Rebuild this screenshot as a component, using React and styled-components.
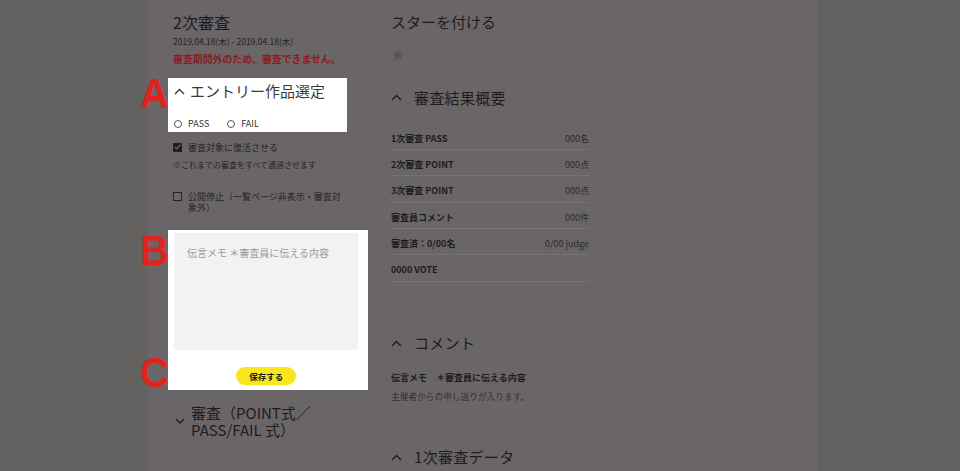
import styled, { createGlobalStyle } from 'styled-components';

const GlobalStyle = createGlobalStyle`
  html, body {
    margin: 0;
    padding: 0;
    height: 471px;
    overflow: hidden;
    background: #646260;
  }
  body {
    font-family: "Noto Sans CJK JP", "Noto Sans", sans-serif;
    color: #1e1c1c;
  }
`;

const ChevronUp = () => (
  <svg width="11" height="7" viewBox="0 0 11 7">
    <polyline points="1,6 5.5,1.5 10,6" fill="none" stroke="#1e1c1c" strokeWidth="1.3" />
  </svg>
);

const ChevronDown = () => (
  <svg width="10" height="6" viewBox="0 0 10 6">
    <polyline points="1,1 5,5 9,1" fill="none" stroke="#1e1c1c" strokeWidth="1.3" />
  </svg>
);

const summary = [
  { label: '1次審査 PASS', value: '000名' },
  { label: '2次審査 POINT', value: '000点' },
  { label: '3次審査 POINT', value: '000点' },
  { label: '審査員コメント', value: '000件' },
  { label: '審査済：0/00名', value: '0/00 judge' },
  { label: '0000 VOTE', value: '' },
];

const App = () => {
  return (
    <>
      <GlobalStyle />
      <Page>
        <LeftCol>
          <Title>2次審査</Title>
          <DateText>2019.04.18(木) - 2019.04.18(木)</DateText>
          <Warning>審査期間外のため、審査できません。</Warning>

          <Highlight $top={12.3} $width={179}>
            <Marker $top={-6.5}>A</Marker>
            <BoxHeading>
              <ChevronUp />
              エントリー作品選定
            </BoxHeading>
            <RadioRow>
              <RadioLabel>
                <RadioDot />
                PASS
              </RadioLabel>
              <RadioLabel>
                <RadioDot />
                FAIL
              </RadioLabel>
            </RadioRow>
          </Highlight>

          <CheckRow $top={10}>
            <CheckBox $checked>
              <svg width="7" height="6" viewBox="0 0 7 6">
                <polyline points="0.8,3 2.7,4.8 6.2,0.8" fill="none" stroke="#6a6667" strokeWidth="1.4" />
              </svg>
            </CheckBox>
            <CheckText>審査対象に復活させる</CheckText>
          </CheckRow>
          <Note>※これまでの審査をすべて通過させます</Note>
          <CheckRow $top={21}>
            <CheckBox />
            <CheckText>公開停止（一覧ページ非表示・審査対象外）</CheckText>
          </CheckRow>

          <Highlight $top={17.2} $width={200} $padded>
            <Marker $top={-1}>B</Marker>
            <Marker $top={121}>C</Marker>
            <MemoArea>伝言メモ ＊審査員に伝える内容</MemoArea>
            <SaveButton>保存する</SaveButton>
          </Highlight>

          <FoldHeading>
            <ChevronDown />
            <span>審査（POINT式／PASS/FAIL 式）</span>
          </FoldHeading>
        </LeftCol>

        <RightCol>
          <PlainHeading $top={11.7}>スターを付ける</PlainHeading>
          <Star>
            <svg width="14" height="14" viewBox="0 0 24 24">
              <polygon
                points="12,1.5 14.9,8.6 22.5,9.2 16.7,14.1 18.5,21.6 12,17.6 5.5,21.6 7.3,14.1 1.5,9.2 9.1,8.6"
                fill="#595657"
              />
            </svg>
          </Star>

          <SectionHeading $top={25.7}>
            <ChevronUp />
            審査結果概要
          </SectionHeading>
          <SummaryList>
            {summary.map((row) => (
              <SummaryRow key={row.label}>
                <RowLabel>{row.label}</RowLabel>
                <RowValue>{row.value}</RowValue>
              </SummaryRow>
            ))}
          </SummaryList>

          <SectionHeading $top={51.5}>
            <ChevronUp />
            コメント
          </SectionHeading>
          <MemoLabel>伝言メモ　＊審査員に伝える内容</MemoLabel>
          <MemoText>主催者からの申し送りが入ります。</MemoText>

          <SectionHeading $top={44.7}>
            <ChevronUp />
            1次審査データ
          </SectionHeading>
        </RightCol>
      </Page>
    </>
  );
};

export default App;

const Page = styled.div`
  margin-left: 148px;
  width: 670px;
  min-height: 471px;
  background: #6a6667;
  padding-left: 25px;
  box-sizing: border-box;
  display: flex;
  align-items: flex-start;
  gap: 23px;
`;

const LeftCol = styled.div`
  width: 195px;
  display: flex;
  flex-direction: column;
  align-items: flex-start;
`;

const Title = styled.h1`
  margin: 12px 0 0;
  font-size: 16px;
  font-weight: 400;
  line-height: 20px;
  color: #1e1c1c;
`;

const DateText = styled.div`
  margin-top: 4px;
  font-size: 8.5px;
  line-height: 11px;
  color: #242121;
`;

const Warning = styled.div`
  margin-top: 5.5px;
  font-size: 9.9px;
  font-weight: 700;
  line-height: 13.5px;
  color: #8a1b21;
`;

const Highlight = styled.div`
  position: relative;
  margin-top: ${(p) => p.$top}px;
  margin-left: -5px;
  width: ${(p) => p.$width}px;
  background: #ffffff;
  box-sizing: border-box;
  padding: ${(p) => (p.$padded ? '2.3px 9.7px 5.4px 6px' : '4px 6px 2px')};
  display: flex;
  flex-direction: column;
  align-items: ${(p) => (p.$padded ? 'center' : 'flex-start')};
`;

const Marker = styled.span`
  position: absolute;
  left: -28px;
  top: ${(p) => p.$top}px;
  font-family: "Liberation Sans", Arial, sans-serif;
  font-weight: 700;
  font-size: 40px;
  line-height: 1;
  color: #e0231d;
  transform: scaleY(1.05);
  transform-origin: top left;
`;

const BoxHeading = styled.div`
  display: flex;
  align-items: center;
  gap: 5px;
  font-size: 15px;
  line-height: 18px;
  color: #3a3a3a;

  svg polyline {
    stroke: #333;
  }
`;

const RadioRow = styled.div`
  margin-top: 17.5px;
  display: flex;
  gap: 18px;
`;

const RadioLabel = styled.label`
  display: flex;
  align-items: center;
  gap: 6px;
  font-size: 9px;
  line-height: 12px;
  color: #333;
`;

const RadioDot = styled.span`
  width: 8px;
  height: 8px;
  border: 1px solid #555;
  border-radius: 50%;
  box-sizing: border-box;
`;

const CheckRow = styled.div`
  margin-top: ${(p) => p.$top}px;
  display: flex;
  align-items: flex-start;
  gap: 6px;
`;

const CheckBox = styled.span`
  flex: none;
  width: 9px;
  height: 9px;
  margin-top: 1px;
  box-sizing: border-box;
  border: 1px solid #262323;
  background: ${(p) => (p.$checked ? '#1e1c1c' : 'transparent')};
  display: flex;
  align-items: center;
  justify-content: center;
`;

const CheckText = styled.span`
  max-width: 156px;
  font-size: 9px;
  line-height: 11px;
  color: #272424;
`;

const Note = styled.div`
  margin-top: 6.5px;
  font-size: 8px;
  line-height: 11px;
  color: #272424;
`;

const MemoArea = styled.div`
  align-self: stretch;
  height: 117.7px;
  background: #f2f2f2;
  box-sizing: border-box;
  padding: 14px 13px;
  font-size: 10px;
  line-height: 12px;
  color: #9a9a9a;
`;

const SaveButton = styled.button`
  margin-top: 16.6px;
  width: 60px;
  height: 18px;
  border: none;
  border-radius: 9px;
  background: #f8e71c;
  font-family: inherit;
  font-size: 8.5px;
  font-weight: 700;
  color: #1a1a1a;
  padding: 0;
`;

const FoldHeading = styled.div`
  margin-top: 13.5px;
  display: flex;
  align-items: center;
  gap: 6px;
  margin-left: 2px;
  font-size: 15px;
  line-height: 17px;
  color: #1e1c1c;

  span {
    max-width: 122px;
  }
`;

const RightCol = styled.div`
  width: 198px;
  display: flex;
  flex-direction: column;
`;

const PlainHeading = styled.h2`
  margin: ${(p) => p.$top}px 0 0;
  font-size: 15px;
  font-weight: 400;
  line-height: 20px;
  color: #1e1c1c;
`;

const Star = styled.div`
  margin-top: 16.3px;
  height: 14px;
  display: flex;
`;

const SectionHeading = styled.h2`
  margin: ${(p) => p.$top}px 0 0;
  display: flex;
  align-items: center;
  gap: 12px;
  font-size: 15px;
  font-weight: 400;
  letter-spacing: 0.3px;
  line-height: 20px;
  color: #1e1c1c;
`;

const SummaryList = styled.div`
  margin-top: 16.1px;
  display: flex;
  flex-direction: column;
`;

const SummaryRow = styled.div`
  display: flex;
  justify-content: space-between;
  padding: 9px 0 5.3px;
  border-bottom: 1px solid #777374;
  font-size: 9px;
  line-height: 11px;
`;

const RowLabel = styled.span`
  font-weight: 700;
  color: #1e1c1c;
`;

const RowValue = styled.span`
  color: #2e2b2b;
`;

const MemoLabel = styled.div`
  margin-top: 18.8px;
  font-size: 9px;
  font-weight: 700;
  line-height: 12px;
  color: #1e1c1c;
`;

const MemoText = styled.div`
  margin-top: 6.7px;
  font-size: 8.7px;
  line-height: 12px;
  color: #333030;
`;
